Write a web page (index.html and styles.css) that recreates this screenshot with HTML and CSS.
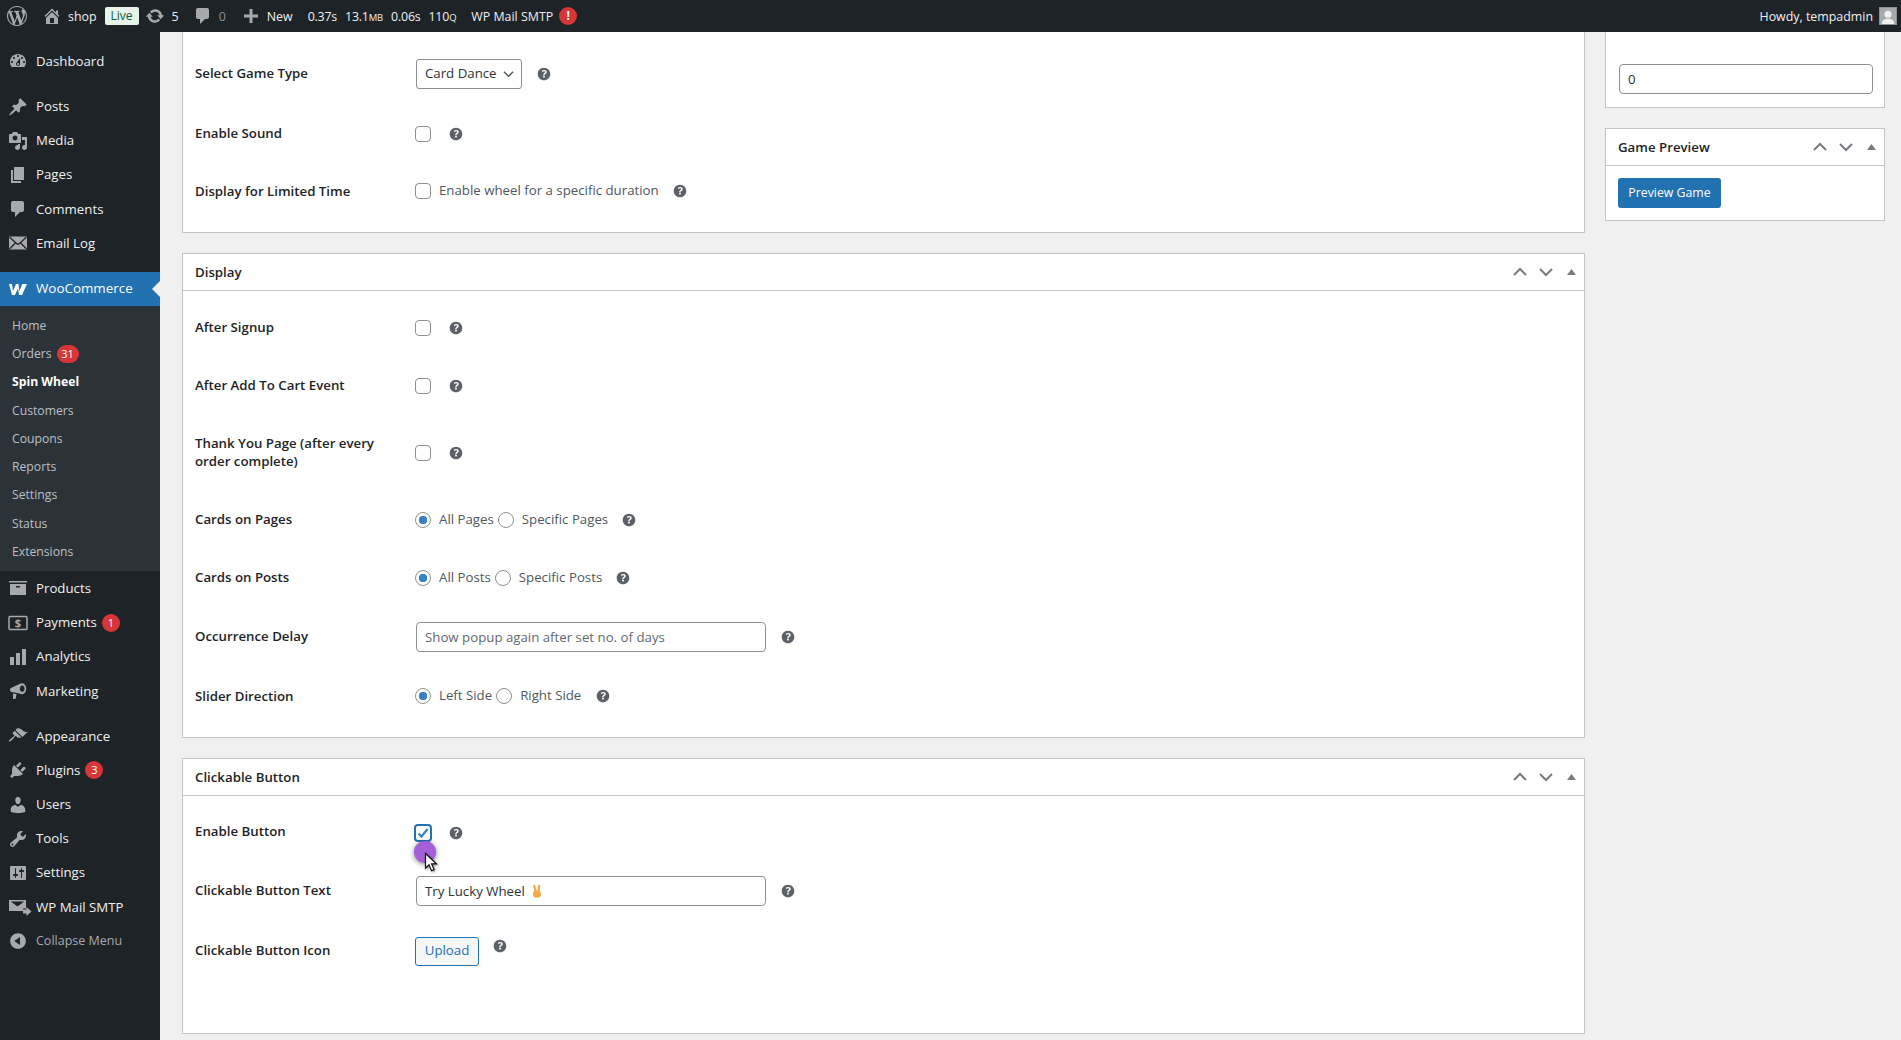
FILE: index.html
```html
<!DOCTYPE html>
<html lang="en">
<head>
<meta charset="utf-8">
<title>Spin Wheel</title>
<link rel="stylesheet" href="styles.css">
</head>
<body>
<svg class="sprite" aria-hidden="true">
  <symbol id="i-help" viewBox="0 0 20 20"><path d="M17 10c0-3.87-3.14-7-7-7-3.87 0-7 3.13-7 7s3.13 7 7 7c3.86 0 7-3.13 7-7zm-6.3 1.48H9.14v-.43c0-.38.08-.7.24-.98s.46-.57.88-.89c.41-.29.68-.53.81-.71.14-.18.2-.39.2-.62 0-.25-.09-.44-.28-.58-.19-.13-.45-.19-.79-.19-.58 0-1.25.19-2 .57l-.64-1.28c.87-.49 1.8-.74 2.77-.74.81 0 1.45.2 1.92.58.48.39.71.91.71 1.55 0 .43-.09.8-.29 1.11-.19.32-.57.67-1.11 1.05-.38.28-.61.49-.71.63-.1.15-.15.34-.15.57v.36zm-1.47 2.23c-.19-.18-.28-.43-.28-.75 0-.33.09-.58.27-.76.18-.17.44-.26.78-.26.33 0 .59.09.77.27s.27.43.27.75c0 .31-.09.56-.27.74-.18.19-.44.28-.77.28-.34 0-.6-.09-.77-.27z"/></symbol>
  <symbol id="i-ctrl" viewBox="0 0 66 16">
    <path class="chev" d="M1 11 7 5l6 6M27 5l6 6 6-6"/>
    <path class="tri" d="M54 11l4.500-6 4.500 6z"/>
  </symbol>
</svg>

<header class="adminbar">
  <svg class="ab-logo" viewBox="0 0 20 20"><path d="M20 10c0-5.51-4.49-10-10-10C4.48 0 0 4.49 0 10c0 5.52 4.48 10 10 10 5.51 0 10-4.48 10-10zM7.78 15.37L4.37 6.22c.55-.02 1.17-.08 1.17-.08.5-.06.44-1.13-.06-1.11 0 0-1.45.11-2.37.11-.18 0-.37 0-.58-.01C4.12 2.69 6.87 1.11 10 1.11c2.33 0 4.45.87 6.05 2.34-.68-.11-1.65.39-1.65 1.58 0 .74.45 1.36.9 2.1.35.61.55 1.36.55 2.46 0 1.49-1.4 5-1.4 5l-3.03-8.37c.54-.02.82-.17.82-.17.5-.05.44-1.25-.06-1.22 0 0-1.44.12-2.38.12-.87 0-2.33-.12-2.33-.12-.5-.03-.56 1.2-.06 1.22l.92.08 1.26 3.41zM17.41 10c.24-.64.74-1.87.43-4.25.7 1.29 1.05 2.71 1.05 4.25 0 3.29-1.73 6.24-4.4 7.78.97-2.59 1.94-5.2 2.92-7.78zM6.1 18.09C3.12 16.65 1.11 13.53 1.11 10c0-1.3.23-2.48.72-3.59C3.25 10.3 4.67 14.2 6.1 18.09zm4.03-6.63l2.58 6.98c-.86.29-1.76.45-2.71.45-.79 0-1.57-.11-2.29-.33.81-2.38 1.62-4.74 2.42-7.1z"/></svg>
  <svg class="ab-ic ab-home" viewBox="0 0 20 20"><path d="M16 8.5l1.53 1.53-1.06 1.06L10 4.62l-6.47 6.47-1.06-1.06L10 2.5l4 4v-2h2v4zm-6-2.46l6 5.99V18H4v-5.97zM12 17v-5H8v5h4z"/></svg>
  <span class="ab-text ab-shop">shop</span>
  <span class="ab-live">Live</span>
  <svg class="ab-ic ab-update" viewBox="0 0 20 20"><path d="M10.2 3.28c3.53 0 6.43 2.61 6.92 6h2.08l-3.5 4-3.5-4h2.32c-.45-1.97-2.21-3.45-4.32-3.45-1.45 0-2.73.71-3.54 1.78L4.95 5.66C6.23 4.2 8.11 3.28 10.2 3.28zm-.4 13.44c-3.52 0-6.43-2.61-6.92-6H.8l3.5-4c1.17 1.33 2.33 2.67 3.5 4H5.48c.45 1.97 2.21 3.45 4.32 3.45 1.45 0 2.73-.71 3.54-1.78l1.71 1.95c-1.28 1.46-3.15 2.38-5.25 2.38z"/></svg>
  <span class="ab-text ab-count">5</span>
  <svg class="ab-ic ab-comment" viewBox="0 0 20 20"><path d="M5 2h9c1.1 0 2 .9 2 2v7c0 1.1-.9 2-2 2h-2l-5 5v-5H5c-1.1 0-2-.9-2-2V4c0-1.1.9-2 2-2z"/></svg>
  <span class="ab-text ab-zero">0</span>
  <svg class="ab-ic ab-plus" viewBox="0 0 20 20"><path d="M17 8.5v3h-5.5V17h-3v-5.500H3v-3h5.500V3h3v5.500z"/></svg>
  <span class="ab-text ab-new">New</span>
  <span class="ab-text ab-stat1">0.37s</span>
  <span class="ab-text ab-stat">13.1<small>MB</small></span>
  <span class="ab-text ab-stat">0.06s</span>
  <span class="ab-text ab-stat">110<small>Q</small></span>
  <span class="ab-text ab-smtp">WP Mail SMTP</span>
  <span class="ab-alert">!</span>
  <span class="ab-text ab-howdy">Howdy, tempadmin</span>
  <span class="ab-avatar"><svg viewBox="0 0 18 18"><circle cx="9" cy="7" r="4"/><path d="M2 18c0-4 3-6 7-6s7 2 7 6z"/></svg></span>
</header>

<div class="shell">
  <nav class="sidebar">
    <ul class="menu">
      <li class="mi"><svg class="mi-ic" viewBox="0 0 20 20"><path d="M3.76 16h12.48c1.1-1.37 1.76-3.11 1.76-5 0-4.42-3.58-8-8-8s-8 3.58-8 8c0 1.89.66 3.63 1.76 5zM10 4c.55 0 1 .45 1 1s-.45 1-1 1-1-.45-1-1 .45-1 1-1zM6 6c.55 0 1 .45 1 1s-.45 1-1 1-1-.45-1-1 .45-1 1-1zm8 0c.55 0 1 .45 1 1s-.45 1-1 1-1-.45-1-1 .45-1 1-1zm-5.370 5.550L12 7v6c0 1.100-.9 2-2 2s-2-.9-2-2c0-.57.24-1.080.63-1.450zM4 10c.55 0 1 .45 1 1s-.45 1-1 1-1-.45-1-1 .45-1 1-1zm12 0c.55 0 1 .45 1 1s-.45 1-1 1-1-.45-1-1 .45-1 1-1zm-5 3c0-.55-.45-1-1-1s-1 .45-1 1 .45 1 1 1 1-.45 1-1z"/></svg>Dashboard</li>
      <li class="mi mi-sep"><svg class="mi-ic" viewBox="0 0 20 20"><path d="M10.440 3.020l1.820-1.820 6.360 6.350-1.830 1.820c-1.050-.68-2.480-.57-3.410.36l-.75.75c-.92.93-1.040 2.350-.35 3.410l-1.830 1.820-2.410-2.410-2.800 2.790c-.42.42-3.380 2.710-3.800 2.290s1.860-3.390 2.280-3.810l2.790-2.790L4.100 9.360l1.830-1.820c1.050.69 2.480.57 3.400-.36l.75-.75c.93-.92 1.050-2.350.36-3.410z"/></svg>Posts</li>
      <li class="mi"><svg class="mi-ic" viewBox="0 0 20 20"><path d="M13 11V4c0-.55-.45-1-1-1h-1.670L9 1H5L3.670 3H2c-.55 0-1 .45-1 1v7c0 .55.45 1 1 1h10c.55 0 1-.45 1-1zM7 4.500c1.380 0 2.500 1.120 2.500 2.500S8.380 9.500 7 9.500 4.500 8.380 4.500 7 5.620 4.500 7 4.500zM14 6h5v10.500c0 1.380-1.120 2.500-2.500 2.500S14 17.880 14 16.500s1.120-2.500 2.500-2.500c.17 0 .34.02.5.05V9h-3V6zm-4 8.050V13h2v3.500c0 1.380-1.120 2.500-2.500 2.500S7 17.880 7 16.500 8.120 14 9.500 14c.17 0 .34.02.5.05z"/></svg>Media</li>
      <li class="mi"><svg class="mi-ic" viewBox="0 0 20 20"><path d="M6 15V2h10v13H6zm-1 1h8v2H3V5h2v11z"/></svg>Pages</li>
      <li class="mi"><svg class="mi-ic" viewBox="0 0 20 20"><path d="M5 2h9c1.100 0 2 .9 2 2v7c0 1.100-.9 2-2 2h-2l-5 5v-5H5c-1.100 0-2-.9-2-2V4c0-1.100.9-2 2-2z"/></svg>Comments</li>
      <li class="mi"><svg class="mi-ic" viewBox="0 0 20 20"><rect x="1" y="3.500" width="18" height="13"/><path class="env-line" d="M1.500 4l7 6.500c.9.8 2.100.8 3 0l7-6.500M1.500 16l6.300-6.500M18.500 16l-6.300-6.500"/></svg>Email Log</li>
      <li class="mi mi-sep mi-current"><svg class="mi-ic mi-woo" viewBox="0 0 20 20"><path d="M1 5h3l1 7 3-7h2.500l.8 7 3-7H19l-5 11h-3l-1-6.500L7 16H4z"/></svg>WooCommerce</li>
      <li class="submenu">
        <ul>
          <li class="si">Home</li>
          <li class="si">Orders<span class="badge badge-wide">31</span></li>
          <li class="si si-current">Spin Wheel</li>
          <li class="si">Customers</li>
          <li class="si">Coupons</li>
          <li class="si">Reports</li>
          <li class="si">Settings</li>
          <li class="si">Status</li>
          <li class="si">Extensions</li>
        </ul>
      </li>
      <li class="mi"><svg class="mi-ic" viewBox="0 0 20 20"><path d="M1 3h18v1.500H1zM2 6h16v11H2zM8 8v1.500h4V8z" fill-rule="evenodd"/></svg>Products</li>
      <li class="mi"><svg class="mi-ic mi-pay" viewBox="0 0 20 20"><rect x="1" y="3.500" width="18" height="13" rx="1" class="pay-box"/><text x="10" y="14" class="pay-sign">$</text></svg>Payments<span class="badge">1</span></li>
      <li class="mi"><svg class="mi-ic" viewBox="0 0 20 20"><path d="M2 10h4v8H2zM8 6h4v12H8zM14 2h4v16h-4z"/></svg>Analytics</li>
      <li class="mi"><svg class="mi-ic" viewBox="0 0 20 20"><path d="M14 2.200c2.400 0 4.200 2.500 4.200 5.500s-1.800 5.500-4.200 5.500c-.6 0-1.200-.2-1.700-.5L5 11.200C3.200 11.400 2 10.400 2 9s.8-2 2-2.500L12 2.800c.6-.4 1.300-.6 2-.6zm.2 2.400c-1.300 0-2.400 1.400-2.400 3.100s1.100 3.100 2.400 3.100 2.400-1.400 2.400-3.100-1.100-3.100-2.400-3.100zM5 12.500l3.500.8-1 4.700H5z" fill-rule="evenodd"/></svg>Marketing</li>
      <li class="mi mi-sep"><svg class="mi-ic" viewBox="0 0 20 20"><path d="M14.480 11.060L7.410 3.990l1.500-1.500c.5-.56 2.300-.47 3.510.32 1.210.8 1.430 1.280 2.910 2.100 1.180.64 2.450 1.260 4.450.85zm-.71.71L6.700 4.700 4.930 6.470c-.39.39-.39 1.020 0 1.410l1.060 1.060c.39.39.39 1.030 0 1.420-.6.6-1.430 1.110-2.210 1.690-.35.26-.7.53-1.010.84C1.430 13.230.4 14.960.9 15.470c.5.5 2.240-.53 3.570-1.870.31-.31.58-.66.84-1.010.58-.78 1.090-1.610 1.690-2.210.39-.39 1.020-.39 1.410 0l1.060 1.060c.39.39 1.020.39 1.410 0z"/></svg>Appearance</li>
      <li class="mi"><svg class="mi-ic" viewBox="0 0 20 20"><path d="M13.110 4.360L9.870 7.600 8 5.730l3.240-3.240c.35-.34 1.050-.2 1.560.32.52.51.66 1.210.31 1.550zm-8 1.770l.91-1.120 9.010 9.010-1.190.84c-.71.71-2.630 1.160-3.820 1.160H6.140L4.900 17.260c-.59.59-1.540.59-2.120 0-.59-.58-.59-1.530 0-2.120l1.240-1.240v-3.880c0-1.130.4-3.190 1.090-3.890zm7.260 3.970l3.240-3.240c.34-.35 1.040-.21 1.550.31.52.51.66 1.210.31 1.550l-3.240 3.250z"/></svg>Plugins<span class="badge">3</span></li>
      <li class="mi"><svg class="mi-ic" viewBox="0 0 20 20"><path d="M10 9.250c-2.270 0-2.730-3.440-2.730-3.440C7 4.020 7.820 2 9.970 2c2.160 0 2.980 2.020 2.710 3.810 0 0-.41 3.440-2.680 3.440zm0 2.570L12.720 10c2.390 0 4.520 2.330 4.520 4.530v2.490s-3.650 1.130-7.240 1.130c-3.650 0-7.240-1.130-7.240-1.130v-2.490c0-2.250 1.940-4.480 4.470-4.480z"/></svg>Users</li>
      <li class="mi"><svg class="mi-ic" viewBox="0 0 20 20"><path d="M16.680 9.770c-1.340 1.340-3.300 1.670-4.950.99l-5.410 6.520c-.99.99-2.590.99-3.580 0s-.99-2.590 0-3.570l6.520-5.420c-.68-1.650-.35-3.610.99-4.950 1.280-1.280 3.120-1.620 4.720-1.060l-2.890 2.890 2.820 2.820 2.860-2.870c.53 1.580.18 3.390-1.080 4.650zM3.810 16.210c.4.39 1.040.39 1.430 0 .4-.4.4-1.040 0-1.430-.39-.4-1.030-.4-1.430 0-.39.39-.39 1.030 0 1.430z"/></svg>Tools</li>
      <li class="mi"><svg class="mi-ic" viewBox="0 0 20 20"><path d="M18 16V4c0-.55-.45-1-1-1H3c-.55 0-1 .45-1 1v12c0 .55.45 1 1 1h14c.55 0 1-.45 1-1zM8 11h1c.55 0 1 .45 1 1s-.45 1-1 1H8v1.500c0 .28-.22.5-.5.5s-.5-.22-.5-.5V13H6c-.55 0-1-.45-1-1s.45-1 1-1h1V5.500c0-.28.22-.5.5-.5s.5.22.5.5V11zm5-2h-1c-.55 0-1-.45-1-1s.45-1 1-1h1V5.500c0-.28.22-.5.5-.5s.5.22.5.5V7h1c.55 0 1 .45 1 1s-.45 1-1 1h-1v5.500c0 .28-.22.5-.5.5s-.5-.22-.5-.5V9z"/></svg>Settings</li>
      <li class="mi"><svg class="mi-ic mi-smtp" viewBox="0 0 24 20"><path d="M1 3h17v8.500h-3v2.500H1zM2.800 4.500l6.700 5 6.700-5zM15 12.500h3.500V10l5 4.500-5 4.500v-2.500H15z" fill-rule="evenodd"/></svg>WP Mail SMTP</li>
      <li class="mi mi-collapse"><svg class="mi-ic" viewBox="0 0 20 20"><path d="M10 2.160c4.330 0 7.840 3.510 7.840 7.840s-3.510 7.840-7.840 7.840S2.160 14.330 2.160 10 5.710 2.160 10 2.160zm2 11.720V6.120L6.180 9.970z"/></svg>Collapse Menu</li>
    </ul>
  </nav>

  <main class="content">
    <div class="col-main">
      <section class="panel panel-clipped">
        <div class="panel-body panel-body-first">
          <div class="row row-tall">
            <label class="lbl lbl-up">Select Game Type</label>
            <div class="ctl"><span class="select">Card Dance<svg viewBox="0 0 12 8"><path d="M1 1.500l5 5 5-5"/></svg></span><svg class="help help-near"><use href="#i-help"/></svg></div>
          </div>
          <div class="row">
            <label class="lbl">Enable Sound</label>
            <div class="ctl ctl-low"><input type="checkbox" class="cb"><svg class="help help-far"><use href="#i-help"/></svg></div>
          </div>
          <div class="row">
            <label class="lbl">Display for Limited Time</label>
            <div class="ctl"><input type="checkbox" class="cb"><span class="opt opt-cb">Enable wheel for a specific duration</span><svg class="help"><use href="#i-help"/></svg></div>
          </div>
        </div>
      </section>

      <section class="panel">
        <div class="panel-head"><h2>Display</h2><svg class="ctrl"><use href="#i-ctrl"/></svg></div>
        <div class="panel-body">
          <div class="row"><label class="lbl">After Signup</label><div class="ctl ctl-low"><input type="checkbox" class="cb"><svg class="help help-far"><use href="#i-help"/></svg></div></div>
          <div class="row"><label class="lbl">After Add To Cart Event</label><div class="ctl ctl-low"><input type="checkbox" class="cb"><svg class="help help-far"><use href="#i-help"/></svg></div></div>
          <div class="row row-double"><label class="lbl">Thank You Page (after every order complete)</label><div class="ctl ctl-low"><input type="checkbox" class="cb"><svg class="help help-far"><use href="#i-help"/></svg></div></div>
          <div class="row"><label class="lbl">Cards on Pages</label><div class="ctl ctl-low"><input type="radio" class="rd" name="a" checked><span class="opt">All Pages</span><input type="radio" class="rd" name="a"><span class="opt opt-last">Specific Pages</span><svg class="help"><use href="#i-help"/></svg></div></div>
          <div class="row"><label class="lbl">Cards on Posts</label><div class="ctl ctl-low"><input type="radio" class="rd" name="b" checked><span class="opt">All Posts</span><input type="radio" class="rd" name="b"><span class="opt opt-last">Specific Posts</span><svg class="help"><use href="#i-help"/></svg></div></div>
          <div class="row row-tall"><label class="lbl">Occurrence Delay</label><div class="ctl ctl-low"><input type="text" class="txt" placeholder="Show popup again after set no. of days"><svg class="help help-near"><use href="#i-help"/></svg></div></div>
          <div class="row row-tall"><label class="lbl">Slider Direction</label><div class="ctl"><input type="radio" class="rd" name="c" checked><span class="opt">Left Side</span><input type="radio" class="rd" name="c"><span class="opt opt-last">Right Side</span><svg class="help help-near"><use href="#i-help"/></svg></div></div>
        </div>
      </section>

      <section class="panel">
        <div class="panel-head"><h2>Clickable Button</h2><svg class="ctrl"><use href="#i-ctrl"/></svg></div>
        <div class="panel-body panel-body-last">
          <div class="row row-short"><label class="lbl lbl-up">Enable Button</label><div class="ctl"><input type="checkbox" class="cb cb-on" checked><svg class="help help-far"><use href="#i-help"/></svg></div></div>
          <div class="row row-tall"><label class="lbl lbl-up">Clickable Button Text</label><div class="ctl"><span class="field"><input type="text" class="txt" value="Try Lucky Wheel"><svg class="emoji" viewBox="0 0 12 14"><path class="emoji-finger" d="M4.600 8 3.200 1.800M7.200 8 8.200 1.800"/><ellipse class="emoji-palm" cx="6" cy="10" rx="4" ry="3.800"/></svg></span><svg class="help help-near"><use href="#i-help"/></svg></div></div>
          <div class="row row-tall"><label class="lbl lbl-up">Clickable Button Icon</label><div class="ctl"><button class="btn-upload" type="button">Upload</button><svg class="help help-high"><use href="#i-help"/></svg></div></div>
        </div>
      </section>
    </div>

    <aside class="col-side">
      <section class="panel panel-clipped">
        <div class="side-field"><input type="text" class="txt txt-full" value="0"></div>
      </section>
      <section class="panel">
        <div class="panel-head panel-head-side"><h2>Game Preview</h2><svg class="ctrl"><use href="#i-ctrl"/></svg></div>
        <div class="side-body"><button class="btn-primary" type="button">Preview Game</button></div>
      </section>
    </aside>
  </main>
</div>

<div class="touch"></div>
<svg class="pointer" viewBox="0 0 14 20"><path d="M1.500 1v14.500l3.500-3.300 2.500 6 2.600-1.100-2.500-5.800h4.800z"/></svg>
</body>
</html>
```
FILE: styles.css
```css
* { box-sizing: border-box; }
html, body { margin: 0; height: 1040px; overflow: hidden; }
body {
  background: #f0f0f1;
  color: #1d2327;
  font-family: "Open Sans", "Noto Sans", sans-serif;
  font-size: 13.250px;
  line-height: 1.3;
}
ul { list-style: none; margin: 0; padding: 0; }
.sprite { position: absolute; width: 0; height: 0; }

/* admin bar */
.adminbar {
  height: 32px;
  background: #1d2327;
  color: #f0f0f1;
  display: flex;
  align-items: center;
  padding: 2px 0 0 7px;
  font-size: 12.400px;
  white-space: nowrap;
}
.adminbar svg { fill: #a7aaad; flex: none; }
.ab-logo { width: 20px; height: 20px; margin-top: -2px; }
.ab-ic { width: 20px; height: 20px; margin-top: -2px; }
.ab-home { margin-left: 15px; }
.ab-shop { margin-left: 6px; }
.ab-live {
  margin: -2px 0 0 8px;
  width: 34px;
  height: 18px;
  line-height: 18px;
  text-align: center;
  background: #e6f4ea;
  color: #0a5c36;
  border-radius: 2px;
  font-size: 12px;
}
.ab-update { margin-left: 6px; }
.ab-count { margin-left: 7px; }
.ab-comment { margin-left: 14px; }
.ab-zero { margin-left: 6px; color: #8c8f94; }
.ab-plus { margin-left: 15px; }
.ab-new { margin-left: 6px; }
.ab-stat1 { margin-left: 15px; letter-spacing: -0.2px; }
.ab-stat { margin-left: 8px; letter-spacing: -0.2px; }
.ab-stat small { font-size: 9.500px; }
.ab-smtp { margin-left: 15px; }
.ab-alert {
  margin: -2px 0 0 6px;
  width: 18px;
  height: 18px;
  border-radius: 50%;
  background: #d63638;
  color: #fff;
  font-size: 12px;
  font-weight: 700;
  line-height: 18px;
  text-align: center;
}
.ab-howdy { margin-left: auto; }
.ab-avatar {
  margin: -2px 4px 0 6px;
  width: 18px;
  height: 18px;
  background: #a7aaad;
  border: 1px solid #8c8f94;
  display: flex;
}
.adminbar .ab-avatar svg { fill: #f0f0f1; width: 100%; height: 100%; margin: 0; }

/* shell */
.shell { display: flex; height: 1008px; }
.sidebar {
  flex: none;
  width: 160px;
  background: #1d2327;
  padding-top: 12.400px;
  color: #f0f0f1;
}
.mi {
  height: 34.200px;
  display: flex;
  align-items: center;
  padding-left: 36px;
  position: relative;
  font-size: 13.250px;
}
.mi-sep { margin-top: 11px; }
.mi-ic {
  position: absolute;
  left: 8px;
  top: 7px;
  width: 20px;
  height: 20px;
  fill: #a7aaad;
}
.env-line { fill: none; stroke: #1d2327; stroke-width: 1.200; }
.mi-smtp { width: 24px; }
.mi-pay { left: 8px; }
.pay-box { fill: none; stroke: #a7aaad; stroke-width: 1.500; }
.pay-sign { fill: #a7aaad; font-size: 11px; font-weight: 700; text-anchor: middle; font-family: "Open Sans", sans-serif; }
.mi-current { background: #2271b1; color: #fff; font-size: 13.400px; }
.mi-current .mi-woo { fill: #fff; }
.mi-current::after {
  content: "";
  position: absolute;
  right: 0;
  top: 9px;
  border: 8px solid transparent;
  border-right-color: #f0f0f1;
  border-left-width: 0;
}
.mi-collapse { color: #a7aaad; font-size: 12.500px; }
.submenu { background: #2c3338; padding: 6px 0 5.500px; }
.si {
  height: 28.250px;
  display: flex;
  align-items: center;
  padding-left: 12px;
  color: rgba(240, 246, 252, 0.72);
  font-size: 12.200px;
}
.si-current { color: #fff; font-weight: 700; }
.badge {
  margin-left: 5px;
  min-width: 18px;
  height: 18px;
  padding: 0 4px;
  border-radius: 9px;
  background: #d63638;
  color: #fff;
  font-size: 11px;
  line-height: 18px;
  text-align: center;
}
.badge-wide { margin-left: 5px; min-width: 22px; }

/* content */
.content {
  flex: 1;
  min-width: 0;
  display: grid;
  grid-template-columns: 1403px 280px;
  column-gap: 20px;
  align-items: start;
  padding-left: 22px;
}
.panel {
  background: #fff;
  border: 1px solid #c3c4c7;
  margin-bottom: 20px;
}
.panel-clipped { border-top: 0; }
.panel-head {
  height: 37px;
  border-bottom: 1px solid #c3c4c7;
  display: flex;
  align-items: center;
  justify-content: space-between;
  padding: 0 5px 0 12px;
}
.panel-head h2 { margin: 0; padding-top: 2px; font-size: 13.250px; font-weight: 600; }
.ctrl { width: 66px; height: 16px; flex: none; }
.chev { fill: none; stroke: #787c82; stroke-width: 2; }
.tri { fill: #787c82; }
.panel-body { padding: 7px 12px 11px; }
.panel-body-first { padding: 12px 12px 12px; }
.panel-body-last { padding: 8px 12px 52px; }
.row {
  display: grid;
  grid-template-columns: 220px 1fr;
  align-items: center;
  min-height: 58px;
}
.row-tall { min-height: 60px; }
.row-short { min-height: 57px; }
.row-double { min-height: 76px; }
.lbl { font-weight: 600; padding-right: 20px; line-height: 18px; }
.lbl-up { padding-bottom: 3px; }
.ctl { display: flex; align-items: center; }
.ctl-low { padding-top: 1px; }
.help { width: 18px; height: 18px; fill: #5b6167; margin-left: 12px; flex: none; }
.help-near { margin-left: 13px; }
.help-far { margin-left: 16px; }
.help-high { margin-bottom: 10px; }

.cb {
  appearance: none;
  margin: 0;
  width: 16px;
  height: 16px;
  background: #fff;
  border: 1px solid #8c8f94;
  border-radius: 4px;
}
.cb-on {
  width: 18px;
  height: 18px;
  margin: 0 -1px;
  border: 2px solid #2271b1;
  background: #fff url("data:image/svg+xml,%3Csvg xmlns='http://www.w3.org/2000/svg' viewBox='0 0 14 14'%3E%3Cpath d='M2.500 7.500l3 3 6-7.500' fill='none' stroke='%233582c4' stroke-width='2.200'/%3E%3C/svg%3E") center / 14px no-repeat;
}
.rd {
  appearance: none;
  margin: 0;
  width: 16px;
  height: 16px;
  background: #fff;
  border: 1px solid #8c8f94;
  border-radius: 50%;
}
.rd:checked { background: radial-gradient(circle, #3582c4 0 4px, #fff 4.500px); }
.opt { margin: 0 4px 0 8px; color: #50575e; }
.opt-cb { margin: 0 0 0 8px; }
.opt-last { margin-right: 0; }

.select {
  margin-left: 1px;
  height: 30px;
  width: 106px;
  border: 1px solid #8c8f94;
  border-radius: 3px;
  display: flex;
  align-items: center;
  justify-content: space-between;
  padding: 0 7px 0 8px;
  color: #2c3338;
  background: #fff;
}
.select svg { width: 11px; height: 8px; fill: none; stroke: #50575e; stroke-width: 1.500; }
.txt {
  margin: 0 0 0 1px;
  width: 350px;
  height: 30px;
  padding: 0 8px;
  border: 1px solid #8c8f94;
  border-radius: 4px;
  background: #fff;
  color: #2c3338;
  font: inherit;
}
.txt::placeholder { color: #646970; opacity: 1; }
.field { position: relative; display: flex; }
.emoji { position: absolute; left: 116px; top: 8px; width: 12px; height: 14px; }
.emoji-finger { fill: none; stroke: #f5a94a; stroke-width: 2.200; stroke-linecap: round; }
.emoji-palm { fill: #f5a94a; }

.btn-upload {
  width: 64px;
  height: 29px;
  padding: 0;
  border: 1px solid #2271b1;
  border-radius: 3px;
  background: #f6f7f7;
  color: #2271b1;
  font: inherit;
}
.side-field { padding: 32px 12px 13px 13px; }
.txt-full { width: 254px; margin: 0; }
.side-body { padding: 12px 12px 12px; }
.btn-primary {
  width: 103px;
  height: 30px;
  padding: 0;
  border: 0;
  border-radius: 3px;
  background: #2271b1;
  color: #fff;
  font: inherit;
  font-size: 12.300px;
  display: block;
}

/* recording cursor overlay */
.touch {
  position: absolute;
  left: 414px;
  top: 841px;
  width: 22px;
  height: 22px;
  border-radius: 50%;
  background: #a55fd8;
  box-shadow: 0 1px 5px rgba(0, 0, 0, 0.5);
}
.pointer {
  position: absolute;
  left: 424px;
  top: 852px;
  width: 14px;
  height: 21px;
  fill: #fff;
  stroke: #111;
  stroke-width: 1.200;
  filter: drop-shadow(1px 1px 1px rgba(0, 0, 0, 0.4));
}
```
